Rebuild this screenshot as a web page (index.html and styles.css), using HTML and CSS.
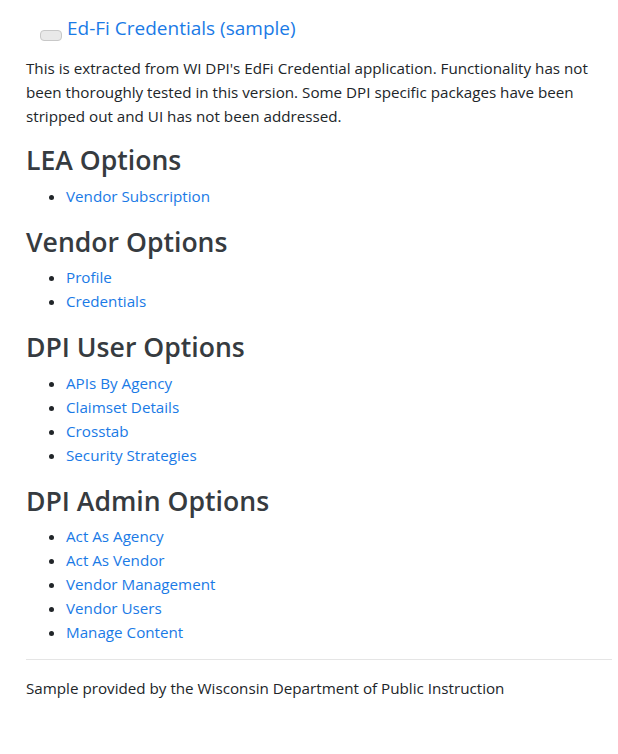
FILE: index.html
```html
<!DOCTYPE html>
<html lang="en">
<head>
<meta charset="utf-8">
<title>Ed-Fi Credentials (sample)</title>
<link rel="stylesheet" href="styles.css">
</head>
<body>
<nav class="navbar">
  <button class="toggler" type="button" aria-label="Toggle navigation"></button>
  <a class="brand" href="#">Ed-Fi Credentials (sample)</a>
</nav>
<main class="container">
  <p class="intro">This is extracted from WI DPI's EdFi Credential application. Functionality has not been thoroughly tested in this version. Some DPI specific packages have been stripped out and UI has not been addressed.</p>

  <h3>LEA Options</h3>
  <ul>
    <li><a href="#">Vendor Subscription</a></li>
  </ul>

  <h3>Vendor Options</h3>
  <ul>
    <li><a href="#">Profile</a></li>
    <li><a href="#">Credentials</a></li>
  </ul>

  <h3>DPI User Options</h3>
  <ul>
    <li><a href="#">APIs By Agency</a></li>
    <li><a href="#">Claimset Details</a></li>
    <li><a href="#">Crosstab</a></li>
    <li><a href="#">Security Strategies</a></li>
  </ul>

  <h3>DPI Admin Options</h3>
  <ul class="last">
    <li><a href="#">Act As Agency</a></li>
    <li><a href="#">Act As Vendor</a></li>
    <li><a href="#">Vendor Management</a></li>
    <li><a href="#">Vendor Users</a></li>
    <li><a href="#">Manage Content</a></li>
  </ul>

  <hr>
  <footer class="footer">Sample provided by the Wisconsin Department of Public Instruction</footer>
</main>
</body>
</html>
```

FILE: styles.css
```css
* { box-sizing: border-box; }
html, body { margin: 0; padding: 0; background: #fff; }
body {
  font-family: "Open Sans", "Noto Sans", Arial, sans-serif;
  font-size: 15.2px;
  line-height: 24px;
  color: #212529;
}
a { color: #1a7ae6; text-decoration: none; }

.navbar {
  display: flex;
  align-items: flex-start;
  padding: 13px 0 0 40px;
  height: 56px;
}
.toggler {
  width: 22px;
  height: 11px;
  margin: 17px 5px 0 0;
  padding: 0;
  border: 1px solid #c8c8c8;
  border-radius: 4px;
  background: #e9e9e9;
}
.brand {
  font-size: 19px;
  line-height: 30px;
}

.container {
  padding: 0 6px 0 26px;
}
.intro { margin: 0 0 16px; }

h3 {
  margin: 0 0 6px;
  font-size: 26.6px;
  line-height: 33.6px;
  font-weight: 600;
  color: #363b40;
}
ul {
  margin: 0 0 18px;
  padding-left: 40px;
}
ul.last { margin-bottom: 15px; }
li::marker { color: #212529; }

hr {
  margin: 15px 0 16px;
  border: 0;
  border-top: 1px solid rgba(0,0,0,.1);
}
.footer { padding-bottom: 24px; }
```
